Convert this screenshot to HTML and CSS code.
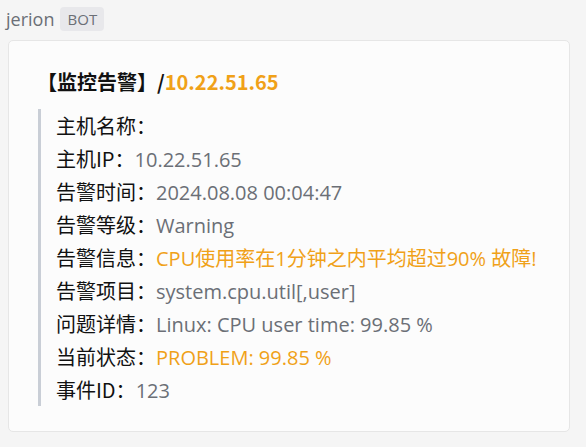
FILE: index.html
```html
<!DOCTYPE html>
<html lang="zh">
<head>
<meta charset="utf-8">
<link rel="stylesheet" href="styles.css">
</head>
<body>
<div class="head">
  <span class="name">jerion</span>
  <span class="badge">BOT</span>
</div>
<div class="card">
  <div class="title">【监控告警】/<span class="hl">10.22.51.65</span></div>
  <div class="quote">
    <div class="lines">
      <div class="row"><span class="lbl">主机名称：</span></div>
      <div class="row"><span class="lbl">主机IP：</span><span class="val">10.22.51.65</span></div>
      <div class="row"><span class="lbl">告警时间：</span><span class="val">2024.08.08 00:04:47</span></div>
      <div class="row"><span class="lbl">告警等级：</span><span class="val">Warning</span></div>
      <div class="row"><span class="lbl">告警信息：</span><span class="val warn">CPU使用率在1分钟之内平均超过90% 故障!</span></div>
      <div class="row"><span class="lbl">告警项目：</span><span class="val">system.cpu.util[,user]</span></div>
      <div class="row"><span class="lbl">问题详情：</span><span class="val">Linux: CPU user time: 99.85 %</span></div>
      <div class="row"><span class="lbl">当前状态：</span><span class="val warn">PROBLEM: 99.85 %</span></div>
      <div class="row"><span class="lbl">事件ID：</span><span class="val">123</span></div>
    </div>
  </div>
</div>
</body>
</html>
```

FILE: styles.css
```css
html, body {
  margin: 0;
  padding: 0;
  background: #f5f5f5;
}
body {
  font-family: "Noto Sans CJK SC", "Noto Sans", sans-serif;
  width: 586px;
  height: 447px;
  overflow: hidden;
}
.head {
  display: flex;
  align-items: center;
  height: 26px;
  padding: 6px 0 0 6px;
  gap: 6px;
}
.name {
  font-family: "Open Sans", "Noto Sans", sans-serif;
  font-size: 18px;
  color: #6b6f76;
  line-height: 24px;
}
.badge {
  font-family: "Open Sans", "Noto Sans", sans-serif;
  background: #e8e8eb;
  color: #6b6f76;
  font-size: 15px;
  line-height: 24px;
  width: 44px;
  text-align: center;
  border-radius: 4px;
}
.card {
  margin: 8px 16px 0 8px;
  height: 392px;
  box-sizing: border-box;
  background: #fcfcfc;
  border: 1px solid #e6e6e6;
  border-radius: 5px;
  padding: 27px 0 0 28px;
}
.title {
  font-size: 20px;
  font-weight: 700;
  color: #111;
  line-height: 28px;
}
.hl {
  color: #f0a118;
}
.quote {
  margin-top: 19px;
  margin-left: 1px;
  border-left: 3px solid #c9ced6;
  padding-left: 15px;
}
.lines {
  margin: -6px 0;
  line-height: 33px;
  font-size: 20px;
}
.row {
  height: 33px;
  white-space: nowrap;
}
.lbl {
  color: #111;
}
.val {
  font-family: "Open Sans", "Noto Sans CJK SC", sans-serif;
  color: #6b6f76;
}
.val.warn {
  color: #f0a118;
}
```
